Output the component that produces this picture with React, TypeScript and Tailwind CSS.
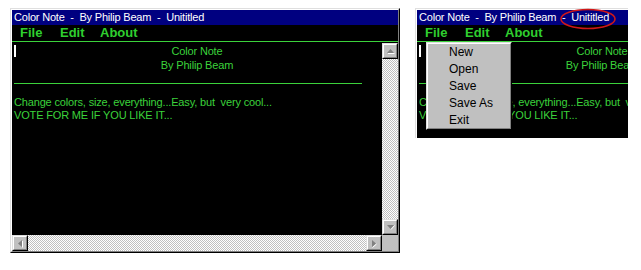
import React from "react";

const G = "text-[#3bd23b]";

function UpArrow() {
  return (
    <svg width="9" height="6" viewBox="0 0 9 6">
      <polygon points="4.5,1 8,5 1,5" fill="#808080" />
      <line x1="2" y1="5.5" x2="8.5" y2="5.5" stroke="#ffffff" strokeWidth="1" />
    </svg>
  );
}
function DownArrow() {
  return (
    <svg width="9" height="6" viewBox="0 0 9 6">
      <polygon points="1,1 8,1 4.5,5" fill="#808080" />
      <line x1="5" y1="5.5" x2="8.5" y2="1.5" stroke="#ffffff" strokeWidth="1" />
    </svg>
  );
}
function LeftArrow() {
  return (
    <svg width="6" height="9" viewBox="0 0 6 9">
      <polygon points="1,4.5 5,1 5,8" fill="#808080" />
      <line x1="5.5" y1="2" x2="5.5" y2="8.5" stroke="#ffffff" strokeWidth="1" />
    </svg>
  );
}
function RightArrow() {
  return (
    <svg width="6" height="9" viewBox="0 0 6 9">
      <polygon points="1,1 5,4.5 1,8" fill="#808080" />
      <line x1="1.5" y1="8.5" x2="5.5" y2="5" stroke="#ffffff" strokeWidth="1" />
    </svg>
  );
}

function Btn({ children }: { children: React.ReactNode }) {
  return (
    <div className="w-[16px] h-[16px] shrink-0 border border-t-[#dfdfdf] border-l-[#dfdfdf] border-r-black border-b-black bg-[#c0c0c0]">
      <div className="w-full h-full border border-t-white border-l-white border-r-[#808080] border-b-[#808080] flex items-center justify-center">
        {children}
      </div>
    </div>
  );
}

const checker =
  "bg-[image:repeating-conic-gradient(#c0c0c0_0%_25%,#ffffff_0%_50%)] bg-[length:2px_2px]";

function Win() {
  return (
    <div className="w-[390px] h-[245px] shrink-0 border border-t-[#dfdfdf] border-l-[#dfdfdf] border-r-black border-b-black bg-[#c0c0c0]">
      <div className="w-full h-full border border-t-white border-l-white border-r-[#808080] border-b-[#808080] flex flex-col">
        <div className="h-[15px] bg-[#000080] text-white text-[11px] tracking-[-0.2px] leading-[15px] pl-[2px] whitespace-pre font-['Liberation_Sans',Arial,sans-serif]">
          {"Color Note  -  By Philip Beam  -  Unititled"}
        </div>
        <div className="h-[16px] bg-black flex items-center pl-[8px] text-[13px] font-bold leading-[16px] text-[#2fcf2f] font-['Liberation_Sans',Arial,sans-serif]">
          <span className="w-[40px]">File</span>
          <span className="w-[40px]">Edit</span>
          <span>About</span>
        </div>
        <div className="h-px bg-[#3bd23b]" />
        <div className="h-px bg-black" />
        <div className="flex h-[192px]">
          <div className={`relative flex-1 bg-black ${G} text-[11px] tracking-[-0.16px] font-['Liberation_Sans',Arial,sans-serif] leading-[14px]`}>
            <div className="absolute left-[2px] top-[2px] w-[2px] h-[12px] bg-white" />
            <div className="text-center pt-[1px]">Color Note</div>
            <div className="text-center">By Philip Beam</div>
            <div className="ml-[2px] mt-[11px] w-[348px] h-px bg-[#3bd23b]" />
            <div className="pl-[2px] pt-[12px] leading-[13px] whitespace-pre">
              {"Change colors, size, everything...Easy, but  very cool..."}
            </div>
            <div className="pl-[2px] leading-[13px]">VOTE FOR ME IF YOU LIKE IT...</div>
          </div>
          <div className={`w-[16px] flex flex-col justify-between ${checker}`}>
            <Btn>
              <UpArrow />
            </Btn>
            <Btn>
              <DownArrow />
            </Btn>
          </div>
        </div>
        <div className="flex h-[16px]">
          <div className={`flex-1 flex justify-between ${checker}`}>
            <Btn>
              <LeftArrow />
            </Btn>
            <Btn>
              <RightArrow />
            </Btn>
          </div>
          <div className="w-[16px] bg-[#c0c0c0]" />
        </div>
      </div>
    </div>
  );
}

export default function App() {
  return (
    <div className="w-[641px] h-[270px] bg-white flex items-start pl-[10px] pt-[8px] gap-[15px]">
      <Win />
      <div className="relative w-[213px] h-[130px] overflow-hidden shrink-0">
        <Win />
        <div className="absolute left-[11px] top-[34px] w-[86px] h-[88px] border border-t-[#dfdfdf] border-l-[#dfdfdf] border-r-black border-b-black bg-[#c0c0c0]">
          <div className="w-full h-full border border-t-white border-l-white border-r-[#808080] border-b-[#808080] pl-[21px] pt-[0px] text-[12px] leading-[17px] text-black font-['Liberation_Sans',Arial,sans-serif]">
            <div>New</div>
            <div>Open</div>
            <div>Save</div>
            <div>Save As</div>
            <div>Exit</div>
          </div>
        </div>
        <svg className="absolute left-[144px] top-[0px]" width="58" height="22" viewBox="0 0 58 22">
          <ellipse cx="29" cy="11" rx="27" ry="9.5" fill="none" stroke="#d01818" strokeWidth="1.6" />
        </svg>
      </div>
    </div>
  );
}
